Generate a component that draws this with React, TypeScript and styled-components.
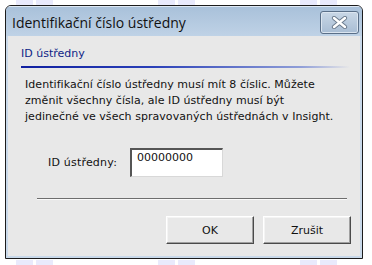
import React from 'react';
import styled, { createGlobalStyle } from 'styled-components';

const GlobalStyle = createGlobalStyle`
  html, body {
    margin: 0;
    padding: 0;
    background: #ffffff;
  }
  body {
    width: 372px;
    height: 265px;
    overflow: hidden;
    background:
      linear-gradient(#e9eafc, #e9eafc) 16px 0 / 17px 5px no-repeat,
      linear-gradient(#e9eafc, #e9eafc) 36px 0 / 17px 5px no-repeat,
      linear-gradient(#e9eafc, #e9eafc) 158px 0 / 17px 5px no-repeat,
      linear-gradient(#e9eafc, #e9eafc) 178px 0 / 17px 5px no-repeat,
      linear-gradient(#e9eafc, #e9eafc) 300px 0 / 17px 5px no-repeat,
      linear-gradient(#e9eafc, #e9eafc) 320px 0 / 17px 5px no-repeat,
      linear-gradient(#e9eafc, #e9eafc) 16px 260px / 17px 5px no-repeat,
      linear-gradient(#e9eafc, #e9eafc) 36px 260px / 17px 5px no-repeat,
      linear-gradient(#e9eafc, #e9eafc) 158px 260px / 17px 5px no-repeat,
      linear-gradient(#e9eafc, #e9eafc) 178px 260px / 17px 5px no-repeat,
      linear-gradient(#e9eafc, #e9eafc) 300px 260px / 17px 5px no-repeat,
      linear-gradient(#e9eafc, #e9eafc) 320px 260px / 17px 5px no-repeat,
      #ffffff;
  }
`;

const Page = styled.div`
  padding: 5px 0 0 5px;
`;

const Window = styled.div`
  width: 356px;
  height: 252px;
  border: 1px solid #1c1c1c;
  border-radius: 6px 6px 0 0;
  background: #c9d9ea;
  display: flex;
  flex-direction: column;
  box-sizing: content-box;
  overflow: hidden;
`;

const TitleBar = styled.div`
  height: 29px;
  display: flex;
  align-items: center;
  justify-content: space-between;
  padding: 0 3px 0 6px;
  background: linear-gradient(#a9c1da, #bfd2e6);
  border-top: 1px solid #dfe9f4;
`;

const Title = styled.div`
  font-family: 'Open Sans', 'Noto Sans', sans-serif;
  font-size: 14px;
  color: #111;
  margin-top: 1px;
`;

const CloseButton = styled.div`
  width: 37px;
  height: 21px;
  margin-top: 2px;
  border: 1px solid #5a6f88;
  border-radius: 3px;
  background: linear-gradient(#c9d7e6, #a8bdd4);
  box-shadow: inset 0 0 0 1px #dbe5f0;
  display: flex;
  align-items: center;
  justify-content: center;
`;

const Body = styled.div`
  flex: 1;
  margin: 0 2px 2px 2px;
  background: #e8e8e8;
  display: flex;
  flex-direction: column;
  font-family: Tahoma, 'DejaVu Sans', sans-serif;
  font-size: 11px;
  color: #111;
`;

const Section = styled.div`
  padding: 11px 0 0 13px;
  margin-right: 10px;
`;

const SectionTitle = styled.div`
  color: #0e1f86;
  font-size: 11px;
  height: 15px;
  padding-bottom: 6px;
  position: relative;
  &::after {
    content: '';
    position: absolute;
    left: 0;
    right: 0;
    bottom: 0;
    height: 2px;
    background: linear-gradient(90deg, #1020a0 0%, #2a40b8 40%, #8f9ed8 85%, #e8e8e8 100%);
  }
`;

const Text = styled.p`
  margin: 9px 0 0 17px;
  line-height: 16px;
  white-space: nowrap;
  letter-spacing: 0.05px;
`;

const FieldRow = styled.div`
  display: flex;
  align-items: center;
  gap: 13px;
  margin: 23px 0 0 40px;
`;

const Label = styled.label`
  letter-spacing: 0.2px;
`;

const Input = styled.div`
  width: 85px;
  height: 25px;
  background: #fff;
  border-top: 2px solid #555;
  border-left: 2px solid #555;
  border-right: 1px solid #d8d8d8;
  border-bottom: 1px solid #d8d8d8;
  padding: 1px 0 0 5px;
  box-sizing: content-box;
`;

const Separator = styled.hr`
  margin: 21px 13px 0 29px;
  border: 0;
  border-top: 1px solid #6e6e6e;
  border-bottom: 1px solid #fafafa;
`;

const Buttons = styled.div`
  display: flex;
  justify-content: flex-end;
  gap: 9px;
  margin: 16px 9px 0 0;
`;

const Button = styled.button`
  width: 88px;
  height: 28px;
  font-family: Tahoma, 'DejaVu Sans', sans-serif;
  font-size: 11px;
  color: #111;
  background: #e8e8e8;
  border-top: 1px solid #ffffff;
  border-left: 1px solid #ffffff;
  border-right: 1px solid #4a4a4a;
  border-bottom: 1px solid #4a4a4a;
  box-shadow: inset -1px -1px 0 #a0a0a0, inset 1px 1px 0 #f4f4f4;
  padding: 0;
`;

const CloseIcon = () => (
  <svg width="17" height="13" viewBox="0 0 17 13">
    <path
      d="M3 2 L14 11 M14 2 L3 11"
      stroke="#6b7a8c"
      strokeWidth="4.2"
      strokeLinecap="round"
    />
    <path
      d="M3 2 L14 11 M14 2 L3 11"
      stroke="#ffffff"
      strokeWidth="2.4"
      strokeLinecap="round"
    />
  </svg>
);

export default function App() {
  return (
    <>
      <GlobalStyle />
      <Page>
        <Window>
          <TitleBar>
            <Title>Identifikační číslo ústředny</Title>
            <CloseButton>
              <CloseIcon />
            </CloseButton>
          </TitleBar>
          <Body>
            <Section>
              <SectionTitle>ID ústředny</SectionTitle>
            </Section>
            <Text>
              Identifikační číslo ústředny musí mít 8 číslic. Můžete
              <br />
              změnit všechny čísla, ale ID ústředny musí být
              <br />
              jedinečné ve všech spravovaných ústřednách v Insight.
            </Text>
            <FieldRow>
              <Label>ID ústředny:</Label>
              <Input>00000000</Input>
            </FieldRow>
            <Separator />
            <Buttons>
              <Button>OK</Button>
              <Button>Zrušit</Button>
            </Buttons>
          </Body>
        </Window>
      </Page>
    </>
  );
}
